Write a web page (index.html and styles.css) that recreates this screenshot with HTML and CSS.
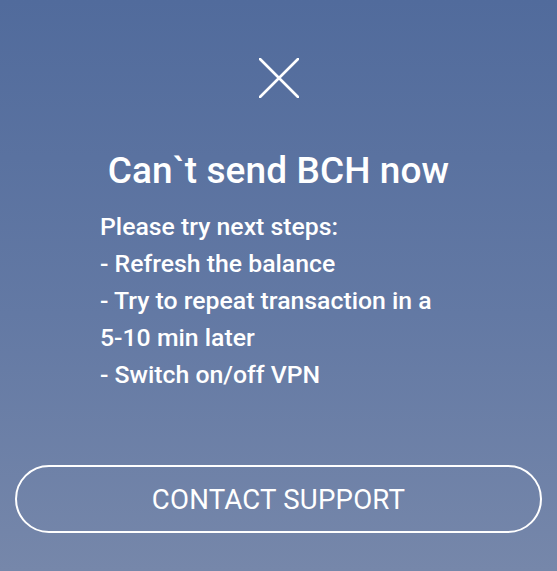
FILE: index.html
```html
<!DOCTYPE html>
<html lang="en">
<head>
  <meta charset="UTF-8" />
  <meta name="viewport" content="width=device-width, initial-scale=1.0" />
  <title>Can't send BCH</title>
  <link rel="stylesheet" href="styles.css">
</head>
<body>
  <div class="error-screen">
    <!-- close / failure mark -->
    <svg class="error-icon" width="40" height="40" viewBox="0 0 40 40" aria-hidden="true">
      <path d="M1 1 L39 39 M39 1 L1 39" stroke="#fff" stroke-width="2.6" stroke-linecap="round" fill="none" />
    </svg>
    <h1 class="error-title">Can`t send BCH now</h1>
    <div class="error-steps">
      <p>Please try next steps:</p>
      <p>- Refresh the balance</p>
      <p>- Try to repeat transaction in a <span class="nowrap">5-10</span> min later</p>
      <p>- Switch on/off VPN</p>
    </div>
    <button class="support-btn" type="button">CONTACT SUPPORT</button>
  </div>
</body>
</html>
```

FILE: styles.css
```css
* { box-sizing: border-box; }
body {
  margin: 0;
  padding: 0;
  font-family: Roboto, 'Noto Sans', sans-serif;
  color: #fff;
  background: linear-gradient(180deg, #516b9c 0%, #6379a4 55%, #7687aa 100%);
  min-height: 100vh;
}
.error-screen {
  display: flex;
  flex-direction: column;
  align-items: center;
  height: 571px;
  padding: 58px 15px 0;
}
.error-icon { display: block; }
.error-title {
  margin: 51px 0 0;
  font-size: 37px;
  font-weight: 500;
  line-height: 44px;
  letter-spacing: 0.1px;
}
.error-steps {
  align-self: stretch;
  margin: 15px 0 0;
  padding: 0 85px;
  font-size: 24.8px;
  font-weight: 500;
  line-height: 37px;
}
.error-steps p { margin: 0; }
.nowrap { white-space: nowrap; }
.support-btn {
  width: 100%;
  height: 68px;
  margin-top: auto;
  margin-bottom: 38px;
  background: transparent;
  border: 2.5px solid #fff;
  border-radius: 34px;
  color: #fff;
  font-family: inherit;
  font-size: 27.6px;
  font-weight: 400;
  letter-spacing: 0.2px;
}
```
